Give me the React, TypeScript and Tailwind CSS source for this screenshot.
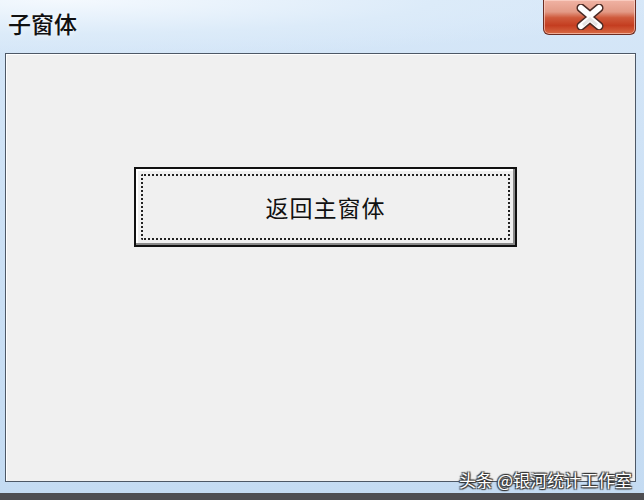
export default function App() {
  return (
    <div className="flex h-[500px] w-[644px] flex-col overflow-hidden bg-[linear-gradient(180deg,#d6e7f8_0%,#cde1f5_40%,#c4dbf2_100%)] font-['Noto_Sans_CJK_SC',sans-serif]">
      <div className="relative flex h-[53px] shrink-0 items-start justify-between bg-[radial-gradient(ellipse_at_10%_0%,#f4f9fe_0%,#dcebf9_45%,transparent_75%)]">
        <span className="ml-[8px] mt-[7px] text-[23px] font-medium leading-[32px] text-[#111] [text-shadow:0_0_6px_rgba(255,255,255,0.9)]">
          子窗体
        </span>
        <div className="mr-[8px] flex h-[35px] w-[93px] items-center justify-center rounded-b-[6px] border border-t-0 border-[#6b2c22] bg-[linear-gradient(180deg,#f0b3a4_0%,#e39a86_35%,#cf5a3c_52%,#c43d20_75%,#d86a45_100%)] shadow-[inset_0_0_0_1px_rgba(255,220,210,0.6)]">
          <svg width="36" height="26" viewBox="0 0 36 26">
            <path
              d="M9 4 L18 11.5 L27 4 M9 22 L18 14.5 L27 22"
              stroke="#4a2a24"
              strokeWidth="9"
              strokeLinecap="round"
              fill="none"
            />
            <path
              d="M9 4 L18 11.5 L27 4 M9 22 L18 14.5 L27 22"
              stroke="#ffffff"
              strokeWidth="6"
              strokeLinecap="round"
              fill="none"
            />
            <path d="M11 21 L18 15 L25 21" stroke="#e4e4e4" strokeWidth="3" fill="none" />
          </svg>
        </div>
      </div>

      <div className="ml-[5px] mr-[8px] flex-1 border border-[#4d5866] bg-[#f0f0f0] shadow-[inset_1px_1px_0_#ffffff]">
        <div className="ml-[128px] mt-[113px] flex h-[80px] w-[383px] items-center justify-center border-2 border-[#111] bg-[#f0f0f0] p-[5px] shadow-[inset_-2px_-2px_0_#8a8a8a,inset_2px_2px_0_#ffffff]">
          <div className="flex h-full w-full items-center justify-center rounded-[2px] border-2 border-dotted border-[#222]">
            <span className="text-[23px] leading-none tracking-[1px] text-[#111]">返回主窗体</span>
          </div>
        </div>
      </div>

      <div className="relative h-[11px] shrink-0">
        <span className="absolute bottom-[5px] right-[12px] text-[17px] leading-none text-white [text-shadow:1px_1px_1px_#333,-1px_-1px_1px_#333,1px_-1px_1px_#333,-1px_1px_1px_#333]">
          头条 @银河统计工作室
        </span>
      </div>
      <div className="h-[7px] shrink-0 bg-[#4e4e52]" />
    </div>
  );
}
